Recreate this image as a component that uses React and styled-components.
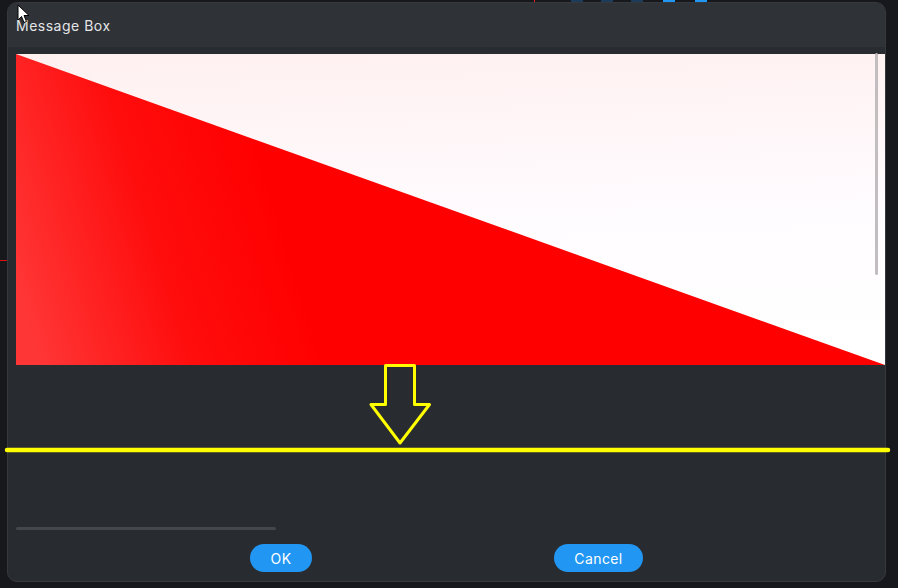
import React from "react";
import styled, { createGlobalStyle } from "styled-components";

const GlobalStyle = createGlobalStyle`
  html, body {
    margin: 0;
    padding: 0;
    background: #17181c;
    overflow: hidden;
  }
  * { box-sizing: border-box; }
`;

const Screen = styled.div`
  position: relative;
  width: 898px;
  height: 588px;
  font-family: Inter, "Noto Sans", sans-serif;
`;

// the window behind the dialog shows a 2px sliver along the top
const BackStrip = styled.div`
  display: flex;
  height: 2px;
  padding-left: 534px;
`;

const Sliver = styled.span`
  flex: none;
  width: ${p => p.w}px;
  margin-left: ${p => p.gap || 0}px;
  background: ${p => p.color};
`;

const Dialog = styled.div`
  margin-left: 7px;
  width: 879px;
  height: 580px;
  display: flex;
  flex-direction: column;
  background: #282b30;
  border: 1px solid #35383d;
  border-radius: 10px;
  overflow: hidden;
`;

const Header = styled.div`
  height: 44px;
  flex: none;
  display: flex;
  align-items: center;
  padding-left: 8px;
  background: #2f3237;
  color: #e4e5e7;
  font-size: 14px;
  letter-spacing: 0.5px;
`;

const Body = styled.div`
  flex: 1;
  display: flex;
  flex-direction: column;
  padding: 7px 0 0 8px;
`;

const Viewport = styled.div`
  position: relative;
  height: 311px;
  flex: none;
  background: #ffffff;
`;

const ScrollThumb = styled.div`
  position: absolute;
  top: -1px;
  right: 7px;
  width: 3px;
  height: 222px;
  border-radius: 2px;
  background: #c2bec0;
`;

const HTrack = styled.div`
  margin-top: auto;
  margin-bottom: 1px;
  width: 260px;
  height: 3px;
  border-radius: 2px;
  background: #44474c;
`;

const Footer = styled.div`
  height: 50px;
  flex: none;
  display: flex;
  justify-content: space-evenly;
  align-items: flex-start;
  padding-top: 13px;
`;

const Button = styled.button`
  height: 28px;
  width: ${p => p.w}px;
  border: none;
  border-radius: 14px;
  background: #2196f3;
  color: #ffffff;
  font-family: inherit;
  font-size: 14px;
  letter-spacing: 0.4px;
  padding: 0;
  cursor: pointer;
`;

const Overlay = styled.svg`
  position: absolute;
  left: 0;
  top: 0;
  pointer-events: none;
`;

const Cursor = styled.svg`
  position: absolute;
  left: 17px;
  top: 4px;
`;

const Picture = () => (
  <svg width="869" height="311" viewBox="0 0 869 311" style={{ display: "block" }}>
    <defs>
      <linearGradient id="sky" x1="0" y1="0" x2="0.1" y2="1">
        <stop offset="0" stopColor="#fff0f0" />
        <stop offset="0.6" stopColor="#fffcff" />
        <stop offset="1" stopColor="#ffffff" />
      </linearGradient>
      <linearGradient id="red" gradientUnits="userSpaceOnUse" x1="0" y1="230" x2="260" y2="150">
        <stop offset="0" stopColor="#ff3636" />
        <stop offset="0.55" stopColor="#ff0c0c" />
        <stop offset="1" stopColor="#ff0000" />
      </linearGradient>
    </defs>
    <rect width="869" height="311" fill="url(#sky)" />
    <polygon points="0,0 869,311 0,311" fill="url(#red)" />
  </svg>
);

export default function App() {
  return (
    <>
      <GlobalStyle />
      <Screen>
        <BackStrip>
          <Sliver w={1} color="#ff1a1a" />
          <Sliver w={12} gap={36} color="#1d3b5a" />
          <Sliver w={12} gap={18} color="#1d3b5a" />
          <Sliver w={12} gap={18} color="#1d3b5a" />
          <Sliver w={12} gap={20} color="#2196f3" />
          <Sliver w={12} gap={20} color="#2196f3" />
        </BackStrip>

        <Dialog>
          <Header>Message Box</Header>
          <Body>
            <Viewport>
              <Picture />
              <ScrollThumb />
            </Viewport>
            <HTrack />
          </Body>
          <Footer>
            <Button w={62}>OK</Button>
            <Button w={89}>Cancel</Button>
          </Footer>
        </Dialog>

        <Overlay width="898" height="588">
          <line x1="0" y1="260.5" x2="7" y2="260.5" stroke="#e01010" strokeWidth="1" />
          <line x1="7" y1="450" x2="888" y2="450" stroke="#ffff00" strokeWidth="4.5" strokeLinecap="round" />
          <polygon
            points="385.5,365.5 414.5,365.5 414.5,404.5 429.5,404.5 400,443 371,404.5 385.5,404.5"
            fill="none"
            stroke="#ffff00"
            strokeWidth="3"
            strokeLinejoin="round"
          />
        </Overlay>

        <Cursor width="14" height="20" viewBox="0 0 14 20">
          <path d="M1 1 L1 16 L4.5 12.5 L7 18.5 L9.5 17.5 L7 11.5 L12 11.5 Z" fill="#ffffff" stroke="#000000" strokeWidth="1" strokeLinejoin="round" />
        </Cursor>
      </Screen>
    </>
  );
}
